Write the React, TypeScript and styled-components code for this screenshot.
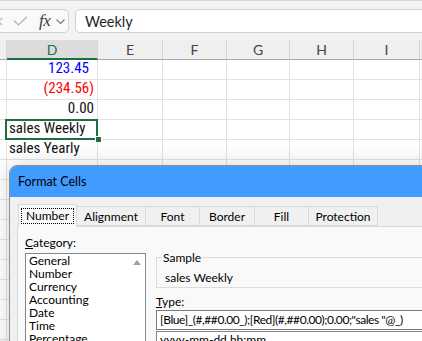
import React from "react";
import styled, { createGlobalStyle } from "styled-components";

const GlobalStyle = createGlobalStyle`
  html, body {
    margin: 0;
    padding: 0;
    background: #f3f3f3;
  }
  body {
    font-family: "Lato", "Liberation Sans", sans-serif;
  }
  * {
    box-sizing: border-box;
  }
`;

const Page = styled.div`
  position: relative;
  width: 422px;
  height: 341px;
  overflow: hidden;
  background: #f3f3f3;
`;

/* formula bar */

const FormulaBar = styled.div`
  display: flex;
  align-items: flex-start;
  gap: 6px;
  height: 40px;
  padding-top: 8px;
  border-top: 1px solid #d6d6d6;
`;

const ActionBox = styled.div`
  display: flex;
  align-items: center;
  margin-left: -10px;
  width: 79px;
  height: 24px;
  padding-left: 3px;
  border: 1px solid #d2d2d2;
  border-radius: 5px;
  background: #f9f9f9;
`;

const IconSlot = styled.span<{ $offset: number }>`
  display: flex;
  align-items: center;
  margin-left: ${({ $offset }) => $offset}px;
`;

const Fx = styled.span`
  font-family: "Liberation Serif", serif;
  font-style: italic;
  font-size: 17px;
  color: #3a3a3a;
  letter-spacing: -0.5px;
`;

const FormulaInput = styled.div`
  flex: 1;
  margin-right: -20px;
  height: 24px;
  display: flex;
  align-items: center;
  padding-left: 9px;
  border: 1px solid #cfcfcf;
  border-radius: 5px;
  background: #fff;
  font-size: 14.5px;
  color: #1f1f1f;
`;

/* sheet */

const Sheet = styled.div`
  display: grid;
  grid-template-columns: 7px 91px 65px 64px 63px 64px 66px 20px;
  grid-auto-rows: 20px;
  background: #fff;
`;

const HeaderCell = styled.div<{ $selected?: boolean }>`
  display: flex;
  align-items: center;
  justify-content: center;
  background: ${({ $selected }) => ($selected ? "#dcdcdc" : "#efefef")};
  border-right: 1px solid #d4d4d4;
  border-bottom: ${({ $selected }) =>
    $selected ? "2px solid #1d6f42" : "1px solid #a8a8a8"};
  color: ${({ $selected }) => ($selected ? "#1b7048" : "#444")};
  font-size: 14px;
`;

const Cell = styled.div<{
  $align?: "left" | "right";
  $color?: string;
  $padRight?: number;
  $active?: boolean;
}>`
  position: relative;
  display: flex;
  align-items: flex-end;
  justify-content: ${({ $align }) =>
    $align === "right" ? "flex-end" : "flex-start"};
  padding: 0 ${({ $padRight }) => $padRight ?? 2}px 2px 2px;
  border-right: 1px solid #e1e1e1;
  border-bottom: 1px solid #e1e1e1;
  color: ${({ $color }) => $color || "#111"};
  font-family: "Liberation Sans Narrow", "Roboto Condensed", "Roboto",
    sans-serif;
  font-size: 15px;
  white-space: nowrap;

  ${({ $active }) =>
    $active &&
    `
    &::after {
      content: "";
      position: absolute;
      z-index: 2;
      top: -1px;
      left: -2px;
      right: -1px;
      bottom: -1px;
      border: 2px solid #1e6e42;
    }
    &::before {
      content: "";
      position: absolute;
      z-index: 3;
      right: -4px;
      bottom: -3px;
      width: 5px;
      height: 5px;
      background: #1e6e42;
      outline: 1px solid #fff;
    }
  `}
`;

/* dialog */

const Dialog = styled.div`
  position: absolute;
  left: 9px;
  top: 165px;
  width: 440px;
  height: 200px;
  border: 1px solid #8d8d8d;
  border-radius: 8px 8px 0 0;
  overflow: hidden;
  background: #f0f0f0;
  box-shadow: 0 0 22px rgba(0, 0, 0, 0.16);
  color: #000;
  font-size: 12px;
`;

const TitleBar = styled.div`
  display: flex;
  align-items: center;
  height: 31px;
  padding-left: 8px;
  background: #409cff;
  font-size: 12.5px;
`;

const DialogBody = styled.div`
  padding: 7px 0 0 7px;
`;

const TabStrip = styled.div`
  display: flex;
  align-items: flex-end;
  height: 22px;
  margin-left: 1px;
`;

const Tab = styled.div<{ $active?: boolean; $width: number }>`
  position: relative;
  z-index: ${({ $active }) => ($active ? 2 : 1)};
  display: flex;
  align-items: center;
  justify-content: center;
  width: ${({ $width }) => $width}px;
  height: ${({ $active }) => ($active ? 23 : 20)}px;
  margin-right: -1px;
  margin-bottom: ${({ $active }) => ($active ? -1 : 0)}px;
  border: 1px solid #d9d9d9;
  border-bottom: ${({ $active }) => ($active ? "none" : "1px solid #d9d9d9")};
  background: ${({ $active }) => ($active ? "#f9f9f9" : "#f0f0f0")};
`;

const FocusLabel = styled.span`
  padding: 0 4px;
  line-height: 14px;
  border: 1px dotted #000;
`;

const Panel = styled.div`
  display: grid;
  grid-template-columns: 121px 1fr;
  column-gap: 10px;
  height: 200px;
  padding: 8px 0 0 7px;
  border: 1px solid #d9d9d9;
  background: #f9f9f9;
`;

const Column = styled.div<{ $top?: number }>`
  display: flex;
  flex-direction: column;
  padding-top: ${({ $top }) => $top ?? 0}px;
`;

const FieldLabel = styled.div<{ $top?: number; $gap: number }>`
  line-height: 15px;
  margin-top: ${({ $top }) => $top ?? 0}px;
  margin-bottom: ${({ $gap }) => $gap}px;
`;

const Key = styled.span`
  text-decoration: underline;
`;

const ListBox = styled.div`
  display: flex;
  height: 100px;
  border: 1px solid #828790;
  background: #fff;
`;

const ListItems = styled.div`
  flex: 1;
  padding: 0 0 0 3px;
`;

const ListItem = styled.div`
  line-height: 13px;
  white-space: nowrap;
`;

const ScrollTrack = styled.div`
  display: flex;
  justify-content: center;
  width: 17px;
  padding-top: 6px;
`;

const Arrow = styled.div`
  width: 0;
  height: 0;
  border-left: 4px solid transparent;
  border-right: 4px solid transparent;
  border-bottom: 5px solid #a3a3a3;
`;

const Group = styled.fieldset`
  margin: 0;
  padding: 0 0 2px 5px;
  border: 1px solid #dcdcdc;
  min-width: 0;
`;

const Legend = styled.legend`
  padding: 0 1px;
  line-height: 15px;
`;

const SampleText = styled.div`
  line-height: 15px;
  padding: 5px 0 0 3px;
`;

const TypeInput = styled.div`
  height: 20px;
  padding-left: 3px;
  line-height: 18px;
  border: 1px solid #7a7a7a;
  background: #fff;
  white-space: nowrap;
  overflow: hidden;
  letter-spacing: -0.45px;
`;

const TypeList = styled.div`
  height: 60px;
  margin-top: 1px;
  padding: 0 3px;
  line-height: 15px;
  border: 1px solid #828790;
  background: #fff;
`;

const CancelIcon = () => (
  <svg width="9" height="9" viewBox="0 0 9 9">
    <path d="M1 1 L8 8 M8 1 L1 8" stroke="#b3b3b3" strokeWidth="1.2" fill="none" />
  </svg>
);

const CheckIcon = () => (
  <svg width="15" height="10" viewBox="0 0 15 10">
    <path d="M1 4.5 L5.5 9 L14 0.8" stroke="#b3b3b3" strokeWidth="1.2" fill="none" />
  </svg>
);

const ChevronIcon = () => (
  <svg width="9" height="5" viewBox="0 0 9 5">
    <path d="M0.5 0.5 L4.5 4.5 L8.5 0.5" stroke="#777" strokeWidth="1.1" fill="none" />
  </svg>
);

const columns = ["", "D", "E", "F", "G", "H", "I", ""];

type RowType = {
  text: string;
  align?: "left" | "right";
  color?: string;
  padRight?: number;
  active?: boolean;
};

const rows: RowType[] = [
  { text: "123.45", align: "right", color: "#0000ff", padRight: 8 },
  { text: "(234.56)", align: "right", color: "#ff0000", padRight: 3 },
  { text: "0.00", align: "right", padRight: 3 },
  { text: "sales Weekly", active: true },
  { text: "sales Yearly" },
  { text: "" },
  { text: "" },
  { text: "" },
  { text: "" },
  { text: "" },
  { text: "" },
  { text: "" },
  { text: "" },
  { text: "" },
];

const tabs = [
  { label: "Number", width: 59 },
  { label: "Alignment", width: 70 },
  { label: "Font", width: 55 },
  { label: "Border", width: 56 },
  { label: "Fill", width: 55 },
  { label: "Protection", width: 70 },
];

const categories = [
  "General",
  "Number",
  "Currency",
  "Accounting",
  "Date",
  "Time",
  "Percentage",
];

const App = () => {
  return (
    <Page>
      <GlobalStyle />
      <FormulaBar>
        <ActionBox>
          <IconSlot $offset={0}>
            <CancelIcon />
          </IconSlot>
          <IconSlot $offset={10}>
            <CheckIcon />
          </IconSlot>
          <IconSlot $offset={11}>
            <Fx>fx</Fx>
          </IconSlot>
          <IconSlot $offset={6}>
            <ChevronIcon />
          </IconSlot>
        </ActionBox>
        <FormulaInput>Weekly</FormulaInput>
      </FormulaBar>

      <Sheet>
        {columns.map((col, i) => (
          <HeaderCell key={"h" + i} $selected={col === "D"}>
            {col}
          </HeaderCell>
        ))}
        {rows.map((row, r) =>
          columns.map((col, c) =>
            col === "D" ? (
              <Cell
                key={r + "-" + c}
                $align={row.align}
                $color={row.color}
                $padRight={row.padRight}
                $active={row.active}
              >
                {row.text}
              </Cell>
            ) : (
              <Cell key={r + "-" + c} />
            )
          )
        )}
      </Sheet>

      <Dialog>
        <TitleBar>Format Cells</TitleBar>
        <DialogBody>
          <TabStrip>
            {tabs.map((tab, i) => (
              <Tab key={tab.label} $active={i === 0} $width={tab.width}>
                {i === 0 ? <FocusLabel>{tab.label}</FocusLabel> : tab.label}
              </Tab>
            ))}
          </TabStrip>
          <Panel>
            <Column>
              <FieldLabel $gap={3}>
                <Key>C</Key>ategory:
              </FieldLabel>
              <ListBox>
                <ListItems>
                  {categories.map((item) => (
                    <ListItem key={item}>{item}</ListItem>
                  ))}
                </ListItems>
                <ScrollTrack>
                  <Arrow />
                </ScrollTrack>
              </ListBox>
            </Column>
            <Column $top={15}>
              <Group>
                <Legend>Sample</Legend>
                <SampleText>sales Weekly</SampleText>
              </Group>
              <FieldLabel $top={6} $gap={1}>
                <Key>T</Key>ype:
              </FieldLabel>
              <TypeInput>
                [Blue]_(#,##0.00_);[Red](#,##0.00);0.00;"sales "@_)
              </TypeInput>
              <TypeList>yyyy-mm-dd hh:mm</TypeList>
            </Column>
          </Panel>
        </DialogBody>
      </Dialog>
    </Page>
  );
};

export default App;
